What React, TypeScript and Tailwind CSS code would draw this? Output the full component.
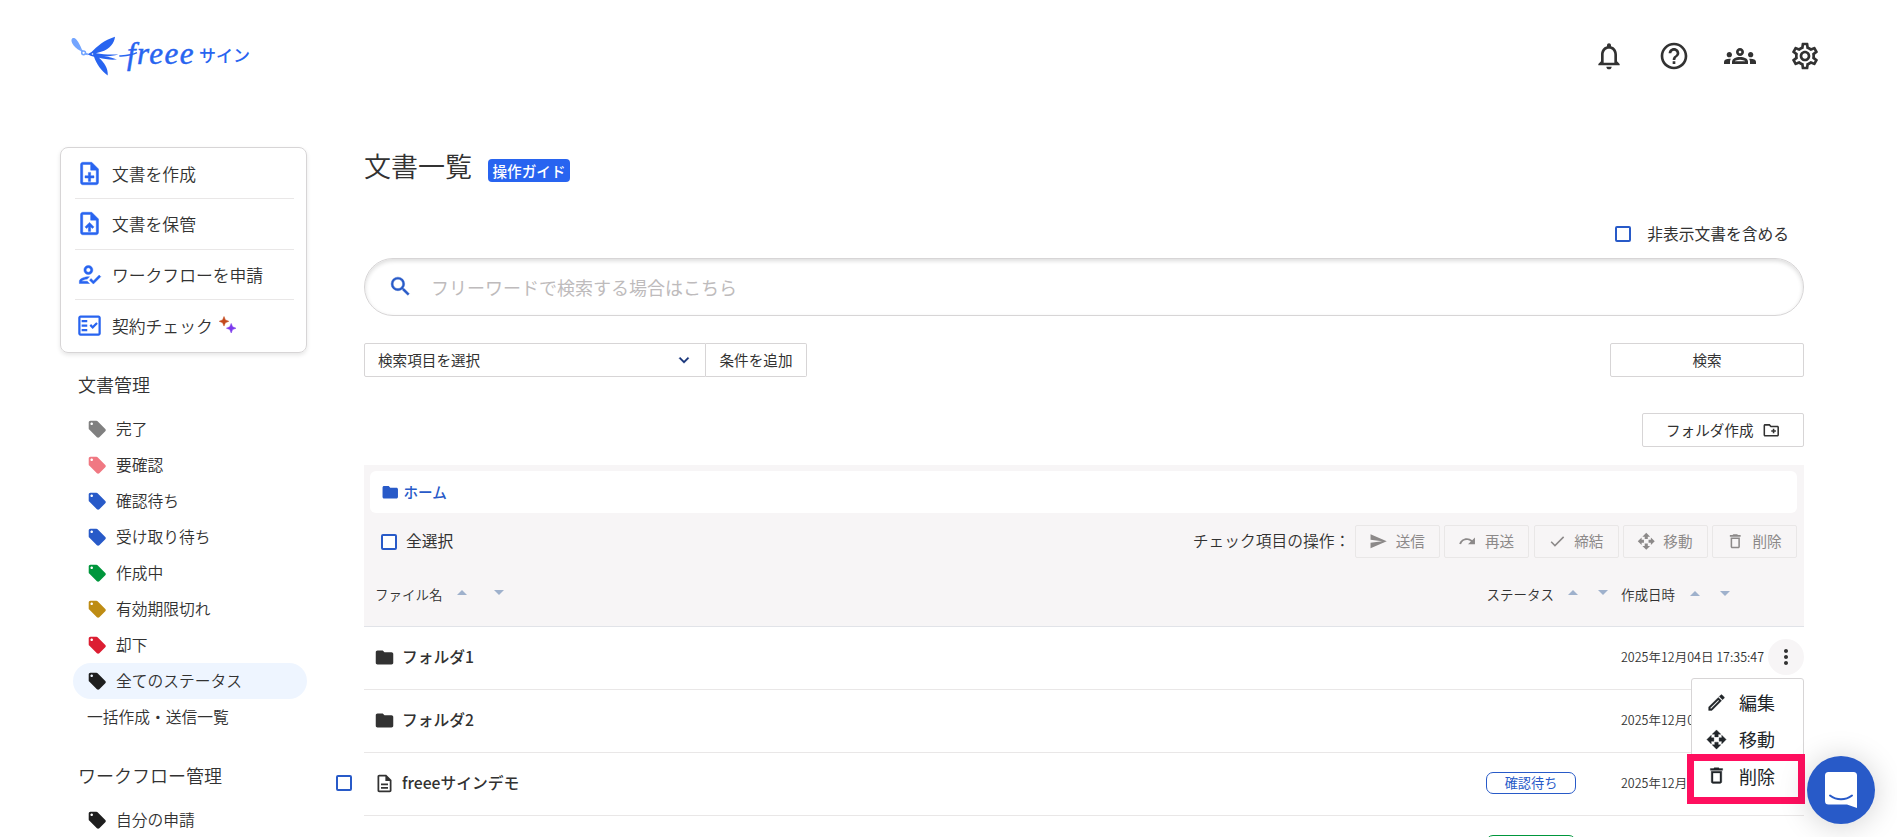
import type { ReactNode } from 'react'
import clsx from 'clsx'
import type { IconType } from 'react-icons'
import {
  MdCheck,
  MdDeleteOutline,
  MdExpandMore,
  MdFolder,
  MdHelpOutline,
  MdLocalOffer,
  MdMoreVert,
  MdNotificationsNone,
  MdOpenWith,
  MdOutlineCreateNewFolder,
  MdOutlineDescription,
  MdOutlineEdit,
  MdOutlineFactCheck,
  MdOutlineGroups,
  MdOutlineHowToReg,
  MdOutlineNoteAdd,
  MdOutlineSettings,
  MdOutlineUploadFile,
  MdRedo,
  MdSearch,
  MdSend,
} from 'react-icons/md'

type FileRow = {
  name: string
  kind: 'folder' | 'document'
  status?: string
  statusClass?: string
  createdAt: string
  menuOpen?: boolean
}

const quickLinks: { label: string; icon: IconType; sparkle?: boolean }[] = [
  { label: '文書を作成', icon: MdOutlineNoteAdd },
  { label: '文書を保管', icon: MdOutlineUploadFile },
  { label: 'ワークフローを申請', icon: MdOutlineHowToReg },
  { label: '契約チェック', icon: MdOutlineFactCheck, sparkle: true },
]

const statusLinks = [
  { label: '完了', color: 'text-[#808080]' },
  { label: '要確認', color: 'text-[#f07882]' },
  { label: '確認待ち', color: 'text-[#285ac8]' },
  { label: '受け取り待ち', color: 'text-[#285ac8]' },
  { label: '作成中', color: 'text-[#00963c]' },
  { label: '有効期限切れ', color: 'text-[#be8c14]' },
  { label: '却下', color: 'text-[#dc1e32]' },
  { label: '全てのステータス', color: 'text-[#1e1e1e]', active: true },
]

const bulkActions: { label: string; icon: IconType }[] = [
  { label: '送信', icon: MdSend },
  { label: '再送', icon: MdRedo },
  { label: '締結', icon: MdCheck },
  { label: '移動', icon: MdOpenWith },
  { label: '削除', icon: MdDeleteOutline },
]

const files: FileRow[] = [
  { name: 'フォルダ1', kind: 'folder', createdAt: '2025年12月04日 17:35:47', menuOpen: true },
  { name: 'フォルダ2', kind: 'folder', createdAt: '2025年12月04日 17:35:47' },
  {
    name: 'freeeサインデモ',
    kind: 'document',
    status: '確認待ち',
    statusClass: 'border-[#285ac8] text-[#285ac8]',
    createdAt: '2025年12月04日 17:35:47',
  },
  {
    name: 'freeeサインデモ',
    kind: 'document',
    status: '作成中',
    statusClass: 'border-[#00963c] text-[#00963c]',
    createdAt: '2025年12月04日 17:35:47',
  },
]

// thickens an icon's drawn paths, leaving the transparent bounding path alone
const boldIcon = '[&>path:not([fill=none])]:stroke-[0.4]'

function Logo() {
  return (
    <div className="flex items-start text-[#2864f0]">
      <svg width="68" height="42" viewBox="0 0 68 42" fill="currentColor" className="shrink-0">
        <path
          d="M1.200 3.600C2.400 2.600 4.200 3.200 5.700 5C7.800 7.700 9.700 11 10.600 14L8.800 15.500C6 14 2.800 11.200 1.200 8.200C.2 6.400 .2 4.500 1.200 3.600z"
          fill="#73a5ff"
        />
        <circle cx="12.600" cy="17.800" r="1.900" fill="none" stroke="#73a5ff" strokeWidth="1.500" />
        <path d="M9.500 14.500l2 2M14.300 18.600l2.500 .8" stroke="#73a5ff" strokeWidth="1.800" />
        <path d="M16.500 19.300L20.500 17C26 11.500 33 5 44 1.700C43.500 8 39 14 30 16.800L25 18.300C32 19.200 40 20.100 47.500 19.200C43 20.800 38 21.400 33 21.300C38 22 42 23 46 24.500C40 25 33 24.300 28 22.800C33 27.500 37.500 33.500 36.700 40.500C30 35.500 25.500 29 23 21.700C20.500 21.200 18.500 20.500 16.500 19.300z" />
        <circle cx="21.500" cy="19" r=".8" fill="#fff" />
        <path d="M48.300 21C54 20.600 60 20.500 66 17.600" fill="none" stroke="currentColor" strokeWidth="1.500" />
      </svg>
      <span className="-ml-[12px] w-[72px] font-['Liberation_Serif',serif] text-[31px] leading-[38px] italic tracking-[1.4px] [-webkit-text-stroke:0.5px]">
        freee
      </span>
      <span className="mt-[11px] text-[17px] leading-none font-medium">サイン</span>
    </div>
  )
}

function Sparkles() {
  return (
    <svg className="ml-[6px]" width="18" height="18" viewBox="0 0 18 18">
      <path d="M5 .5L6.400 3.900L9.800 5.300L6.400 6.700L5 10.100L3.600 6.700L.2 5.300L3.600 3.900z" fill="#c3491d" stroke="#c3491d" strokeWidth=".5" />
      <path d="M12.200 7.400L13.600 10.800L17 12.200L13.600 13.600L12.200 17L10.800 13.600L7.400 12.200L10.800 10.800z" fill="#7c3aed" stroke="#7c3aed" strokeWidth=".5" />
    </svg>
  )
}

function Checkbox({ className }: { className?: string }) {
  return <span className={clsx('block h-4 w-4 shrink-0 rounded-[2px] border-2 border-[#285ac8] bg-white', className)} />
}

function SortArrows({ className }: { className: string }) {
  return (
    <span className={clsx('flex items-center', className)}>
      <span className="h-0 w-0 border-x-[5px] border-b-[5px] border-x-transparent border-b-[#9fb1cc]" />
      <span className="h-0 w-0 border-x-[5px] border-t-[5px] border-x-transparent border-t-[#9fb1cc]" />
    </span>
  )
}

function OutlineButton({ className, children }: { className?: string; children: ReactNode }) {
  return (
    <button
      className={clsx(
        'flex h-[34px] items-center justify-center rounded-[2px] border border-[#d7d5d6] bg-white text-[14.6px]',
        className,
      )}
    >
      {children}
    </button>
  )
}

function Header() {
  return (
    <header className="flex h-[147px] items-start justify-between pt-[35px] pr-[76px] pl-[71px]">
      <Logo />
      <div className="mt-[5px] flex gap-[33.3px]">
        <MdNotificationsNone size={32} />
        <MdHelpOutline size={32} />
        <MdOutlineGroups size={32} />
        <MdOutlineSettings size={32} />
      </div>
    </header>
  )
}

function TagLink({ label, color, active }: { label: string; color: string; active?: boolean }) {
  return (
    <a className={clsx('ml-[13px] flex h-9 items-center rounded-full pl-[13.5px] text-[15.75px]', active && 'bg-[#eef5ff]')}>
      <MdLocalOffer size={20.5} className={clsx('mt-px mr-[9px]', color)} />
      {label}
    </a>
  )
}

function Sidebar() {
  return (
    <aside className="w-[247px] shrink-0 font-[350]">
      <div className="h-[206px] rounded-[8px] border border-[#d7d5d6] pr-[12px] pl-[14px] shadow-[0_2px_4px_rgba(0,0,0,0.1)]">
        {quickLinks.map(({ label, icon: Icon, sparkle }, i) => (
          <a
            key={label}
            className={clsx(
              'flex items-center pl-px text-[16.8px]',
              i > 0 ? 'h-[50.700px] border-t border-[#e9e7e7]' : 'h-[50px] pt-px',
            )}
          >
            <Icon size={27} className={clsx('mr-[9px] text-[#2864f0]', boldIcon)} />
            <span className="mt-[2px]">{label}</span>
            {sparkle && <Sparkles />}
          </a>
        ))}
      </div>
      <h2 className="mt-[18px] mb-[13px] ml-[18px] text-[18px] leading-[27px]">文書管理</h2>
      {statusLinks.map(link => (
        <TagLink key={link.label} {...link} />
      ))}
      <a className="ml-[27px] flex h-9 items-center text-[15.75px]">一括作成・送信一覧</a>
      <h2 className="mt-[27px] mb-[13px] ml-[18px] text-[18px] leading-[27px]">ワークフロー管理</h2>
      <TagLink label="自分の申請" color="text-[#1e1e1e]" />
    </aside>
  )
}

function RowMenu() {
  return (
    <div className="absolute top-[51px] right-0 z-10 h-[120px] w-[113px] rounded-[3px] border border-[#d7d5d6] bg-white pt-[5px] text-[18px] text-[#212529]">
      <div className="flex h-[37px] items-center pl-[14px]">
        <MdOutlineEdit size={21} className={clsx('mr-[12px]', boldIcon)} />
        編集
      </div>
      <div className="flex h-[37px] items-center pl-[14px]">
        <MdOpenWith size={21} className={clsx('mr-[12px]', boldIcon)} />
        移動
      </div>
      <div className="flex h-[37px] items-center pl-[14px]">
        <MdDeleteOutline size={21} className={clsx('-mt-[3px] mr-[12px]', boldIcon)} />
        削除
      </div>
      <div className="absolute top-[75px] -left-[5px] h-[50px] w-[118px] border-[7px] border-[#ff0f5f]" />
    </div>
  )
}

function Row({ file }: { file: FileRow }) {
  const isFolder = file.kind === 'folder'
  return (
    <div className="relative flex h-[63px] items-center border-b border-[#e9e7e7] pb-[2px]">
      {!isFolder && <Checkbox className="mr-[12px] -ml-[28px]" />}
      <div className="flex grow items-center pl-[10px] text-[15.75px] font-medium">
        {isFolder ? (
          <MdFolder size={21} className="mr-[7px]" />
        ) : (
          <MdOutlineDescription size={21} className="mr-[7px]" />
        )}
        {file.name}
      </div>
      <div className="w-[135px] shrink-0">
        {file.status && (
          <span
            className={clsx(
              'flex h-[22px] w-[90px] items-center justify-center rounded-[7px] border text-[13.2px] leading-none',
              file.statusClass,
            )}
          >
            {file.status}
          </span>
        )}
      </div>
      <div className="w-[147px] shrink-0 text-[12.5px] font-[350] whitespace-nowrap">{file.createdAt}</div>
      <div className="w-9 shrink-0">
        {file.menuOpen && (
          <button className="flex h-9 w-9 items-center justify-center rounded-full bg-[#f7f5f6]">
            <MdMoreVert size={24} />
          </button>
        )}
      </div>
      {file.menuOpen && <RowMenu />}
    </div>
  )
}

function FileTable() {
  return (
    <section className="mt-[18px]">
      <div className="h-[162px] border-b border-[#e1e3e8] bg-[#f7f5f6] pt-[6px] pr-[7px] pl-[6px]">
        <div className="flex h-[42px] items-center rounded-[6px] bg-white pl-[11px] text-[14.6px] font-medium text-[#285ac8]">
          <MdFolder size={18.5} className="mr-[4px]" />
          ホーム
        </div>
        <div className="mt-[12px] flex h-[33px] items-center text-[15.75px]">
          <Checkbox className="mr-[9px] ml-[11px]" />
          <span className="-mt-[2px]">全選択</span>
          <span className="-mt-[2px] mr-[5px] ml-auto font-[350]">チェック項目の操作：</span>
          <div className="flex gap-[4.2px]">
            {bulkActions.map(({ label, icon: Icon }) => (
              <button
                key={label}
                className="flex h-[33px] w-[85px] items-center rounded-[2px] border border-[#e9e7e7] pb-px pl-[13px] text-[14.6px] text-[#8c8989]"
              >
                <Icon size={18.5} className="mr-[8px]" />
                {label}
              </button>
            ))}
          </div>
        </div>
        <div className="mt-[26px] flex h-[20px] items-center pl-[5px] text-[13.5px] font-[350]">
          ファイル名
          <SortArrows className="-mt-[4px] ml-[14px] gap-[27px]" />
          <span className="ml-auto">ステータス</span>
          <SortArrows className="-mt-[4px] ml-[14px] gap-[20px]" />
          <span className="ml-[13px]">作成日時</span>
          <SortArrows className="-mt-[2px] mr-[67px] ml-[15px] gap-[20px]" />
        </div>
      </div>
      {files.map((file, i) => (
        <Row key={i} file={file} />
      ))}
    </section>
  )
}

function ChatButton() {
  return (
    <button className="fixed top-[756px] left-[1807px] z-20 flex h-[68px] w-[68px] items-center justify-center rounded-full bg-[#285ac8] shadow-[0_2px_30px_rgba(0,0,0,0.18)]">
      <svg width="32" height="37" viewBox="0 0 32 37">
        <path d="M3.500 0h25A3.500 3.500 0 0 1 32 3.500V36L22 32.500H3.500A3.500 3.500 0 0 1 0 29V3.500A3.500 3.500 0 0 1 3.500 0z" fill="#fff" />
        <path d="M5 23.500c6.500 5 15.500 5 22 0" fill="none" stroke="#285ac8" strokeWidth="2" strokeLinecap="round" />
      </svg>
    </button>
  )
}

export default function App() {
  return (
    <div className="h-[837px] w-[1897px] overflow-hidden bg-white font-['Noto_Sans_CJK_JP',sans-serif] text-[#323232]">
      <Header />
      <div className="flex pl-[60px]">
        <Sidebar />
        <main className="ml-[57px] w-[1440px] shrink-0">
          <div className="flex h-[40px] items-center">
            <h1 className="-mt-[2px] text-[27px] leading-[40px] font-[350]">文書一覧</h1>
            <a className="mt-[7px] ml-[16px] flex h-[23px] w-[82px] items-center justify-center rounded-[4px] bg-[#2864f0] text-[14.6px] font-medium text-white">
              操作ガイド
            </a>
          </div>
          <label className="mt-[35px] flex h-[24px] items-center justify-end pr-[15px] text-[15.75px]">
            <Checkbox className="mr-[16px]" />
            非表示文書を含める
          </label>
          <div className="mt-[12px] flex h-[58px] items-center rounded-full border border-[#d7d5d6] pl-[23px] text-[18px] text-[#bebbbc] shadow-[inset_0_2px_4px_rgba(0,0,0,0.14)]">
            <MdSearch size={25} className={clsx('-mt-[2px] mr-[18px] text-[#285ac8]', boldIcon)} />
            フリーワードで検索する場合はこちら
          </div>
          <div className="mt-[27px] flex">
            <OutlineButton className="w-[342px] rounded-r-none pr-[11px] pl-[13px]">
              <span className="grow text-left">検索項目を選択</span>
              <MdExpandMore size={20} className={clsx('text-[#143278]', boldIcon)} />
            </OutlineButton>
            <OutlineButton className="w-[101px] rounded-l-none border-l-0">条件を追加</OutlineButton>
            <OutlineButton className="ml-auto w-[194px]">検索</OutlineButton>
          </div>
          <div className="mt-[36px] flex justify-end">
            <OutlineButton className="w-[162px]">
              フォルダ作成
              <MdOutlineCreateNewFolder size={18.5} className="ml-[8px]" />
            </OutlineButton>
          </div>
          <FileTable />
        </main>
      </div>
      <ChatButton />
    </div>
  )
}
